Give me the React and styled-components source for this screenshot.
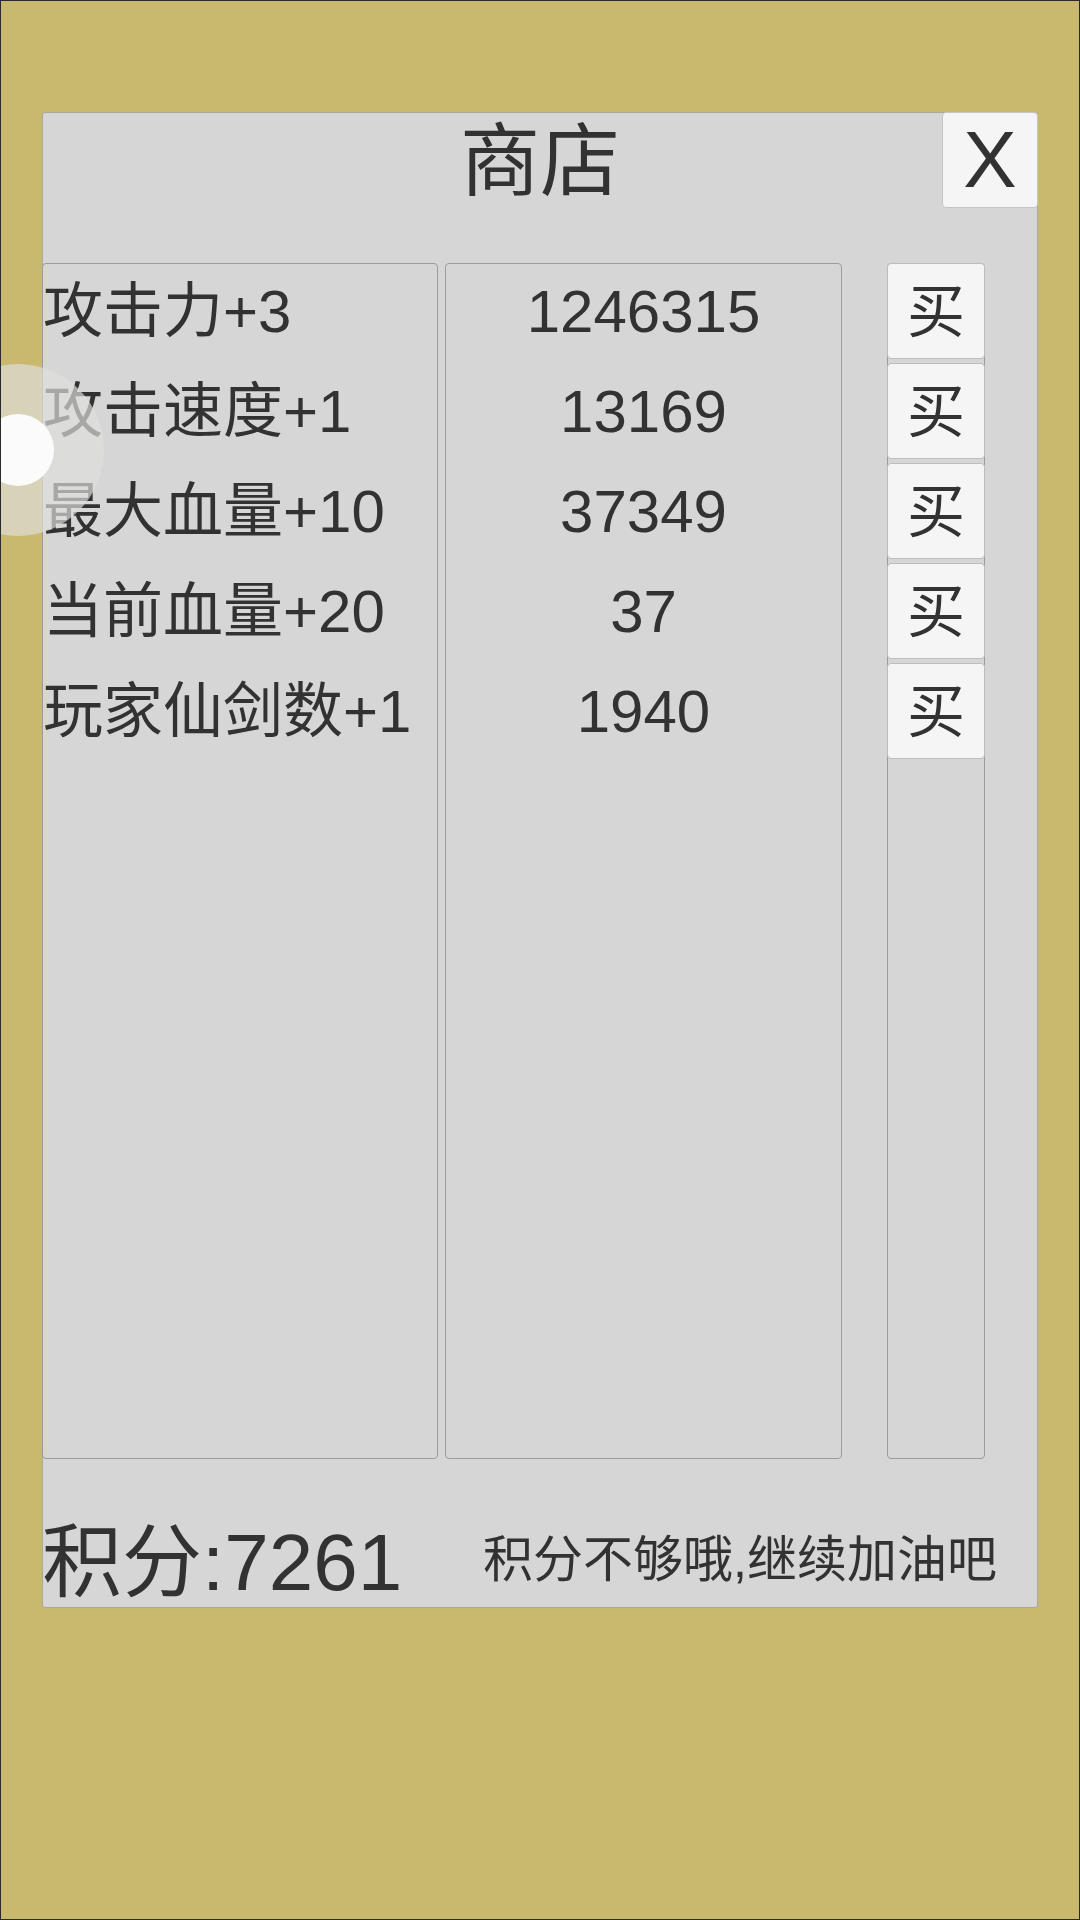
import React from "react";
import styled, { createGlobalStyle } from "styled-components";

const GlobalStyle = createGlobalStyle`
  html, body {
    margin: 0;
    padding: 0;
  }
  body {
    font-family: "Liberation Sans", "Noto Sans CJK SC", sans-serif;
    color: #323232;
  }
  * { box-sizing: border-box; }
`;

const Screen = styled.div`
  position: relative;
  width: 1080px;
  height: 1920px;
  background: #c9b96f;
  border: 1px solid #2a2a2a;
  padding: 111px 41px 0 41px;
  overflow: hidden;
`;

const Panel = styled.div`
  width: 996px;
  height: 1496px;
  background: #d6d6d6;
  border: 1px solid #a9a9a0;
  border-radius: 3px;
  display: flex;
  flex-direction: column;
`;

const Header = styled.div`
  flex-shrink: 0;
  height: 150px;
  display: grid;
  grid-template-columns: 1fr auto 1fr;
`;

const Title = styled.h1`
  grid-column: 2;
  margin: 0;
  font-size: 80px;
  font-weight: 400;
  line-height: 90px;
  padding-top: 4px;
`;

const CloseButton = styled.button`
  grid-column: 3;
  justify-self: end;
  align-self: start;
  width: 96px;
  height: 96px;
  margin: -1px -1px 0 0;
  background: #f5f5f5;
  border: 1px solid #c4c4c4;
  border-radius: 4px;
  font-family: "Liberation Sans", sans-serif;
  font-size: 80px;
  line-height: 1;
  color: #323232;
  padding: 0;
`;

const Table = styled.div`
  flex-shrink: 0;
  display: grid;
  grid-template-columns: 396px 397px 136px;
  column-gap: 7px;
  height: 1196px;
  margin-left: -1px;
`;

const List = styled.div`
  width: ${({ $width }) => $width || "auto"};
  justify-self: ${({ $width }) => ($width ? "end" : "stretch")};
  border: 1px solid #9c9c9c;
  border-radius: 4px;
  background: #d6d6d6;
  display: flex;
  flex-direction: column;
  gap: 4px;
`;

const Cell = styled.div`
  height: 96px;
  display: flex;
  align-items: center;
  justify-content: ${({ $center }) => ($center ? "center" : "flex-start")};
  padding-bottom: ${({ $center }) => ($center ? "0" : "12px")};
  font-size: 60px;
  white-space: nowrap;
  margin-top: ${({ $first }) => ($first ? "-1px" : "0")};
`;

const BuyButton = styled.button`
  height: 96px;
  margin: ${({ $first }) => ($first ? "-1px -1px 0" : "0 -1px")};
  background: #f5f5f5;
  border: 1px solid #bdbdbd;
  border-radius: 4px;
  font-family: "Noto Sans CJK SC", sans-serif;
  font-size: 58px;
  line-height: 1;
  color: #323232;
  padding: 0 0 8px;
`;

const Footer = styled.div`
  flex: 1;
  display: flex;
  align-items: center;
  justify-content: space-between;
  padding: 0 40px 0 0;
  margin-top: 38px;
`;

const Score = styled.div`
  font-size: 80px;
  margin-left: -1px;
`;

const Hint = styled.div`
  font-size: 50px;
`;

const FloatBall = styled.div`
  position: absolute;
  left: -69px;
  top: 363px;
  width: 172px;
  height: 172px;
  border-radius: 50%;
  background: rgba(222, 222, 220, 0.68);
  display: flex;
  align-items: center;
  justify-content: center;
`;

const BallCore = styled.div`
  width: 72px;
  height: 72px;
  border-radius: 50%;
  background: #fbfbfb;
`;

const items = [
  { name: "攻击力+3", price: 1246315 },
  { name: "攻击速度+1", price: 13169 },
  { name: "最大血量+10", price: 37349 },
  { name: "当前血量+20", price: 37 },
  { name: "玩家仙剑数+1", price: 1940 },
];

export default function App() {
  return (
    <>
      <GlobalStyle />
      <Screen>
        <Panel>
          <Header>
            <Title>商店</Title>
            <CloseButton>X</CloseButton>
          </Header>
          <Table>
            <List>
              {items.map((it, i) => (
                <Cell key={it.name} $first={i === 0}>{it.name}</Cell>
              ))}
            </List>
            <List>
              {items.map((it, i) => (
                <Cell key={it.name} $center $first={i === 0}>{it.price}</Cell>
              ))}
            </List>
            <List $width="98px">
              {items.map((it, i) => (
                <BuyButton key={it.name} $first={i === 0}>买</BuyButton>
              ))}
            </List>
          </Table>
          <Footer>
            <Score>积分:7261</Score>
            <Hint>积分不够哦,继续加油吧</Hint>
          </Footer>
        </Panel>
        <FloatBall>
          <BallCore />
        </FloatBall>
      </Screen>
    </>
  );
}
